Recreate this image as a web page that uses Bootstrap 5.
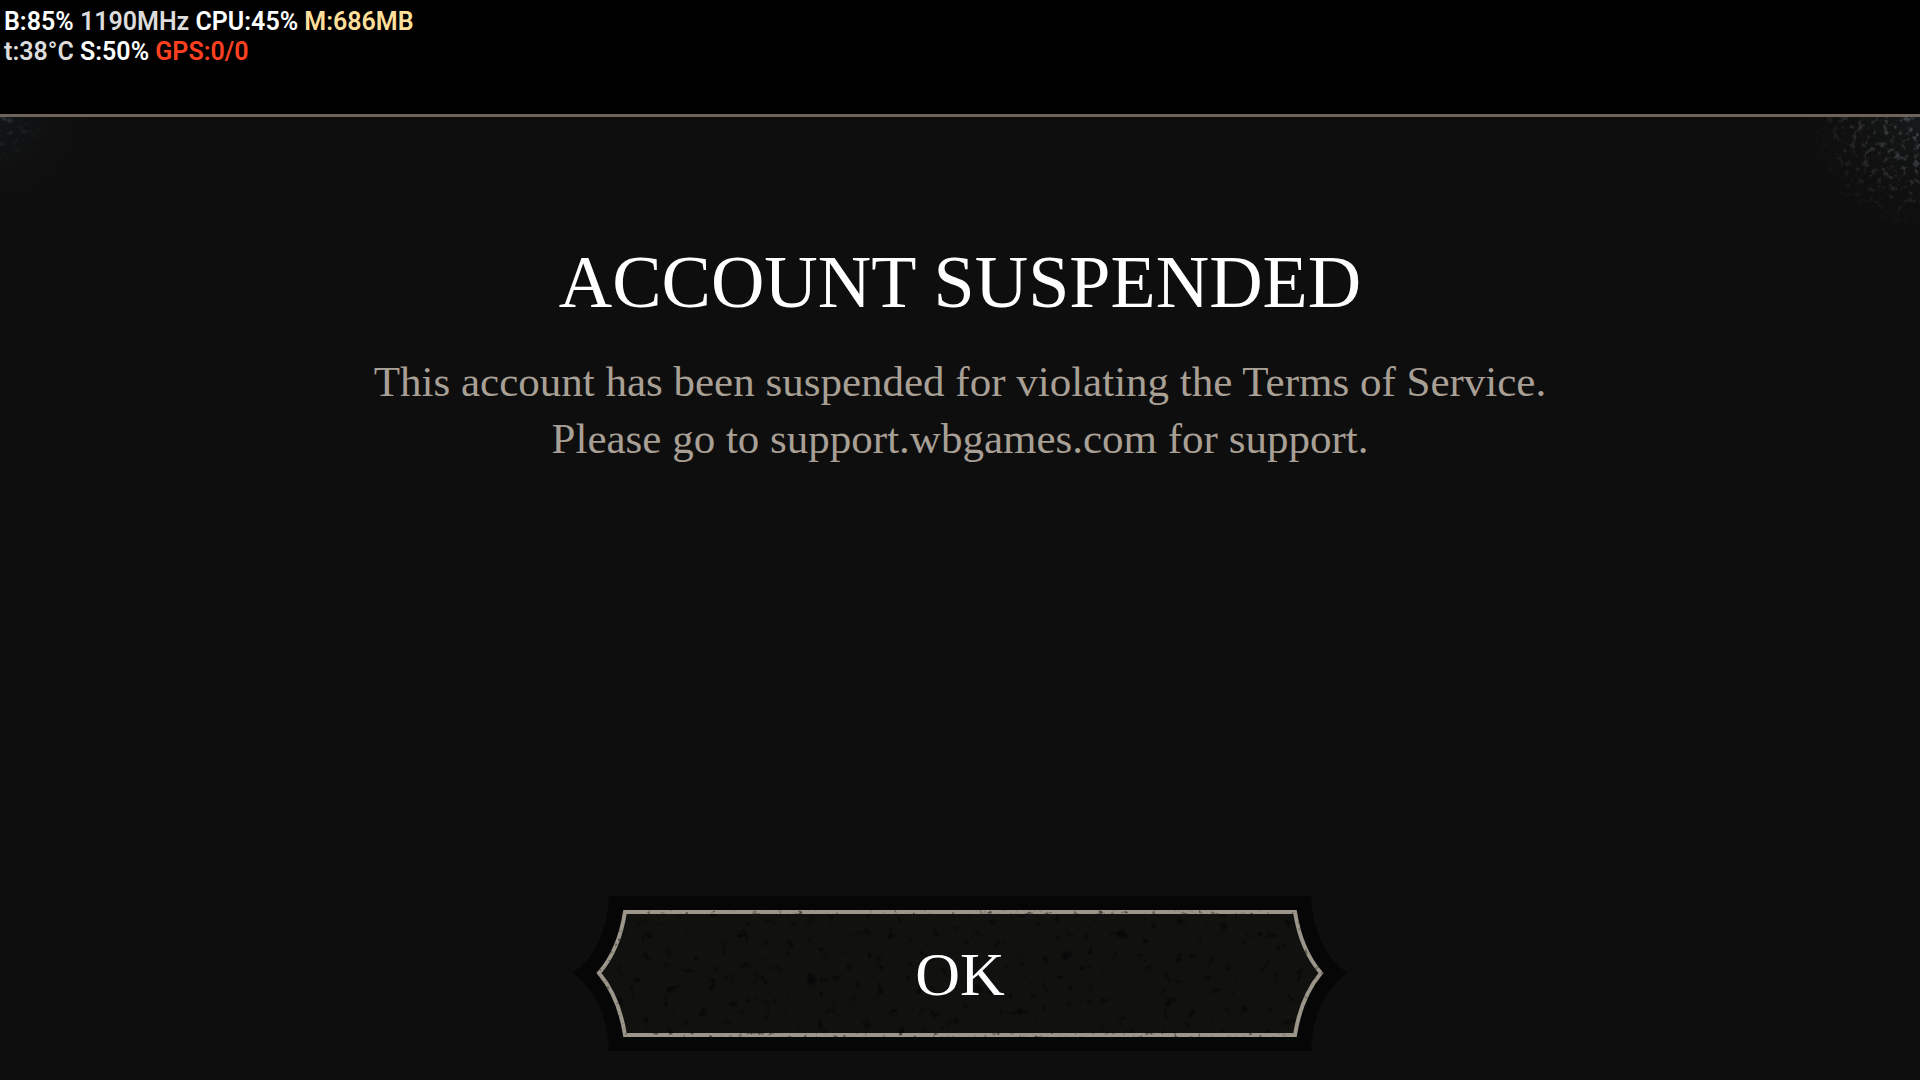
<!DOCTYPE html>
<html lang="en">
<head>
<meta charset="utf-8">
<meta name="viewport" content="width=device-width, initial-scale=1">
<title>Account Suspended</title>
<link href="https://cdn.jsdelivr.net/npm/bootstrap@5.3.0/dist/css/bootstrap.min.css" rel="stylesheet">
<style>
  body { background: #0e0e0e; }
  .hud { background: #000; color: #fff; border-bottom: 3px solid #6e6259; min-height: 117px;
         padding: 7px 4px; font: 600 25px/30px Roboto, sans-serif; }
  .hud-dim { color: #dcdcdc; }
  .hud-mem { color: #ffdf9a; }
  .hud-gps { color: #ff4020; }
  .notice { font-family: "Liberation Serif", serif; padding: 117px 24px 29px; }
  .notice-title { color: #fff; font-size: 74px; line-height: 96px; margin-bottom: 23px; }
  .notice-text { color: #a89f95; font-size: 43px; line-height: 57px; }
  .grit { width: 200px; height: 140px; top: 0; pointer-events: none; }
  .grit, .ok-btn svg { color-interpolation-filters: sRGB; }
  .ok-btn { width: 774px; max-width: 100%; height: 155px; background: none; border: 0; color: #fff;
            font-size: 62px; line-height: 80px; }
</style>
<script src="https://cdn.jsdelivr.net/npm/bootstrap@5.3.0/dist/js/bootstrap.bundle.min.js" defer></script>
</head>
<body class="min-vh-100 d-flex flex-column">
<header class="hud">
  <div>B:85% <span class="hud-dim">1190MHz</span> CPU:45% <span class="hud-mem">M:686MB</span></div>
  <div><span class="hud-dim">t:38°C</span> S:50% <span class="hud-gps">GPS:0/0</span></div>
</header>
<main class="notice position-relative flex-grow-1 d-flex flex-column align-items-center text-center">
  <svg class="grit position-absolute start-0" viewBox="0 0 200 140" aria-hidden="true">
    <defs>
      <radialGradient id="glowL" gradientUnits="userSpaceOnUse" cx="0" cy="0" r="110">
        <stop offset="0" stop-color="#131517"/><stop offset="1" stop-color="#0e0e0e" stop-opacity="0"/>
      </radialGradient>
      <radialGradient id="fadeL" gradientUnits="userSpaceOnUse" cx="0" cy="0" r="50">
        <stop offset="0" stop-color="#888"/><stop offset="1" stop-color="#000"/>
      </radialGradient>
      <mask id="maskL"><rect width="200" height="140" fill="url(#fadeL)"/></mask>
      <filter id="speck" x="0" y="0" width="100%" height="100%">
        <feTurbulence type="fractalNoise" baseFrequency=".16" numOctaves="5" seed="8"/>
        <feColorMatrix values="0 0 0 0 .27  0 0 0 0 .28  0 0 0 0 .29  5 0 0 0 -2.7"/>
      </filter>
    </defs>
    <rect width="200" height="140" fill="url(#glowL)"/>
    <g mask="url(#maskL)"><rect width="200" height="140" filter="url(#speck)"/></g>
  </svg>
  <svg class="grit position-absolute end-0" viewBox="0 0 200 140" aria-hidden="true">
    <defs>
      <radialGradient id="glowR" gradientUnits="userSpaceOnUse" cx="200" cy="0" r="130">
        <stop offset="0" stop-color="#17191a"/><stop offset="1" stop-color="#0e0e0e" stop-opacity="0"/>
      </radialGradient>
      <radialGradient id="fadeR" gradientUnits="userSpaceOnUse" cx="200" cy="0" r="115">
        <stop offset="0" stop-color="#fff"/><stop offset=".5" stop-color="#888"/><stop offset="1" stop-color="#000"/>
      </radialGradient>
      <mask id="maskR"><rect width="200" height="140" fill="url(#fadeR)"/></mask>
    </defs>
    <rect width="200" height="140" fill="url(#glowR)"/>
    <g mask="url(#maskR)"><rect width="200" height="140" filter="url(#speck)"/></g>
  </svg>

  <h1 class="notice-title fw-normal">ACCOUNT SUSPENDED</h1>
  <p class="notice-text mb-5">This account has been suspended for violating the Terms of Service.<br>
    Please go to <a class="text-reset text-decoration-none" href="https://support.wbgames.com">support.wbgames.com</a> for support.</p>

  <button type="button" class="ok-btn position-relative mt-auto p-0">
    <svg class="position-absolute top-0 start-0 w-100 h-100" viewBox="0 0 774 155" aria-hidden="true">
      <defs>
        <filter id="pits" x="0" y="0" width="100%" height="100%">
          <feTurbulence type="fractalNoise" baseFrequency=".09" numOctaves="5" seed="3"/>
          <feColorMatrix values="0 0 0 0 .03  0 0 0 0 .03  0 0 0 0 .03  5 0 0 0 -3.2" result="n"/>
          <feComposite in="n" in2="SourceAlpha" operator="in" result="p"/>
          <feMerge><feMergeNode in="SourceGraphic"/><feMergeNode in="p"/></feMerge>
        </filter>
        <filter id="wear" x="-5%" y="-5%" width="110%" height="110%">
          <feTurbulence type="fractalNoise" baseFrequency=".2" numOctaves="3" seed="11"/>
          <feColorMatrix values="0 0 0 0 .3  0 0 0 0 .28  0 0 0 0 .25  5 0 0 0 -3.1" result="n"/>
          <feComposite in="n" in2="SourceAlpha" operator="in" result="p"/>
          <feMerge><feMergeNode in="SourceGraphic"/><feMergeNode in="p"/></feMerge>
        </filter>
      </defs>
      <path fill="#060606" d="M36 0H738Q740 52 774 77Q740 103 738 155H36Q34 103 0 77Q34 52 36 0Z"/>
      <path fill="#11110f" filter="url(#pits)" d="M52 16H722Q728 54 748 77Q728 101 722 139H52Q46 101 26 77Q46 54 52 16Z"/>
      <path fill="none" stroke="#9c958a" stroke-width="4" filter="url(#wear)" d="M52 16H722Q728 54 748 77Q728 101 722 139H52Q46 101 26 77Q46 54 52 16Z"/>
    </svg>
    <span class="position-relative">OK</span>
  </button>
</main>
</body>
</html>
